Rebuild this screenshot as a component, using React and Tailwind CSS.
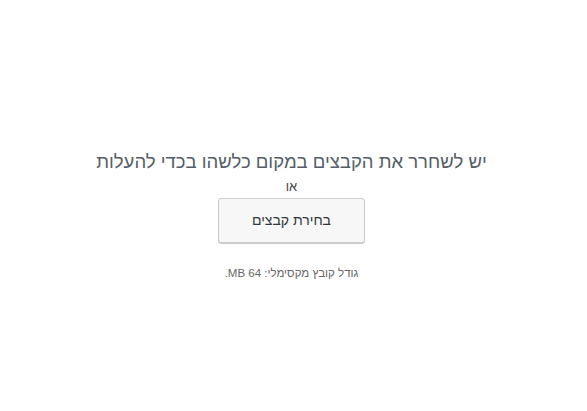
import React from 'react';

export default function App() {
  return (
    <div
      dir="rtl"
      className="w-[587px] h-[411px] bg-white flex flex-col items-center pt-[148px] pr-[4px]"
      style={{ fontFamily: '"Liberation Sans", Arial, sans-serif' }}
    >
      <h2 className="m-0 text-[18.5px] leading-[28px] font-normal text-[#555d66]">
        יש לשחרר את הקבצים במקום כלשהו בכדי להעלות
      </h2>
      <p className="m-0 mt-[2px] text-[13px] leading-[18px] text-[#444]">או</p>
      <button
        type="button"
        className="mt-[2px] h-[45px] w-[147px] text-[14px] text-[#32373c] bg-[#f7f7f7] border border-[#cccccc] rounded-[3px] shadow-[0_1px_0_#cccccc]"
      >
        בחירת קבצים
      </button>
      <p className="m-0 mt-[21px] text-[11.5px] leading-[18px] text-[#666]">
        גודל קובץ מקסימלי: 64 MB.
      </p>
    </div>
  );
}
